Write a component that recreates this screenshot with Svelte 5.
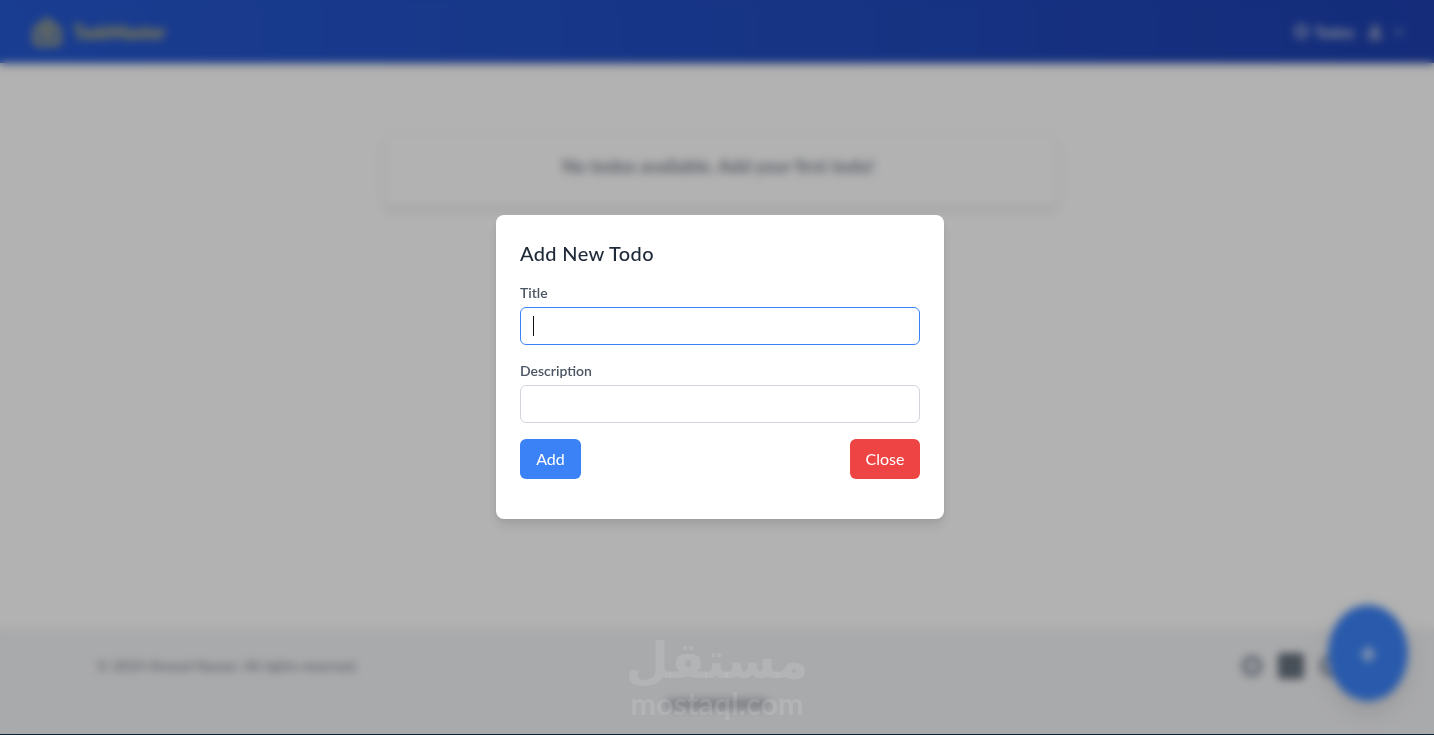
<script>
  let title = $state('');
  let description = $state('');
</script>

<div class="page">
  <header class="topbar">
    <div class="brand">
      <svg class="logo" viewBox="0 0 24 24" fill="none" stroke="#d8c55e" stroke-width="3" stroke-linejoin="round"><path d="M12 2 L22 10 V20 a2 2 0 0 1-2 2 H4 a2 2 0 0 1-2-2 V10 Z"/><circle cx="12" cy="13" r="3"/></svg>
      <span class="brand-name">TaskMaster</span>
    </div>
    <nav class="nav">
      <a class="nav-link" href="#todos">
        <svg class="nav-icon" viewBox="0 0 24 24" fill="none" stroke="#c5cbd8" stroke-width="4"><circle cx="12" cy="12" r="9"/></svg>
        <span>Todos</span>
      </a>
      <svg class="user-icon" viewBox="0 0 24 24" fill="none" stroke="#aab3c8" stroke-width="4"><circle cx="12" cy="7" r="5"/><path d="M3 23c0-6 4-8 9-8s9 2 9 8z"/></svg>
      <svg class="chev" viewBox="0 0 12 12" fill="none" stroke="#c5cbd8" stroke-width="2"><path d="M2 4l4 4 4-4"/></svg>
    </nav>
  </header>

  <main class="content">
    <div class="empty-card">No todos available. Add your first todo!</div>
  </main>

  <footer class="footer">
    <div class="footer-row">
      <span class="copy">© 2024 Ahmed Nasser. All rights reserved.</span>
      <div class="socials">
        <svg class="soc round" viewBox="0 0 24 24" fill="none" stroke="#858e9e" stroke-width="5"><circle cx="12" cy="12" r="8"/></svg>
        <svg class="soc square" viewBox="0 0 24 24" fill="#66717e"><rect width="24" height="24" rx="3"/></svg>
        <svg class="soc round" viewBox="0 0 24 24" fill="none" stroke="#858e9e" stroke-width="5"><circle cx="12" cy="12" r="8"/></svg>
      </div>
    </div>
    <div class="credit"></div>
  </footer>

  <button class="fab" aria-label="Add todo">+</button>
</div>

<div class="overlay">
  <form class="modal" onsubmit={(e) => e.preventDefault()}>
    <h2>Add New Todo</h2>
    <label class="field">
      <span>Title</span>
      <div class="input-wrap">
        <input class="focused" type="text" bind:value={title} />
        <i class="caret"></i>
      </div>
    </label>
    <label class="field">
      <span>Description</span>
      <input type="text" bind:value={description} />
    </label>
    <div class="actions">
      <button class="btn add" type="submit">Add</button>
      <button class="btn close" type="button">Close</button>
    </div>
  </form>
</div>

<div class="watermark">
  <div class="wm-ar" dir="rtl" lang="ar">مستقل</div>
  <div class="wm-en">mostaql.com</div>
</div>

<style>
  :global(body) {
    margin: 0;
    background: #0c2233;
    font-family: "Lato", "Liberation Sans", sans-serif;
    overflow: hidden;
  }
  .page {
    height: 734px;
    display: flex;
    flex-direction: column;
    background: #fff;
    position: relative;
    overflow: hidden;
  }
  .topbar {
    height: 63px;
    flex: none;
    display: flex;
    align-items: center;
    justify-content: space-between;
    padding: 0 30px 0 33px;
    background: linear-gradient(90deg, #2558d0, #1e40af);
    box-shadow: 0 4px 6px rgba(0, 0, 0, 0.12);
    position: relative;
  }
  .brand { display: flex; align-items: center; gap: 12px; }
  .logo { width: 28px; height: 30px; }
  .brand-name { color: #d8c55e; font-size: 18px; font-weight: 700; white-space: nowrap; }
  .nav { display: flex; align-items: center; }
  .nav-link { display: flex; align-items: center; gap: 5px; color: #c5cbd8; text-decoration: none; font-size: 15px; font-weight: 700; }
  .nav-icon { width: 15px; height: 15px; }
  .user-icon { width: 14px; height: 18px; margin-left: 14px; }
  .chev { width: 10px; height: 10px; margin-left: 12px; }
  .content {
    flex: 1;
    padding: 72px 0 0 8px;
    display: flex;
    justify-content: center;
    align-items: flex-start;
  }
  .empty-card {
    width: 672px;
    height: 72px;
    box-sizing: border-box;
    padding: 0 6px 10px 0;
    display: flex;
    align-items: center;
    justify-content: center;
    background: #fff;
    border-radius: 8px;
    box-shadow: 0 4px 6px rgba(0, 0, 0, 0.1), 0 0 4px rgba(0, 0, 0, 0.05);
    color: #868c98;
    font-size: 18px;
    font-weight: 700;
  }
  .footer {
    height: 106px;
    flex: none;
    background: #f3f4f6;
    padding: 27px 92px 0 97px;
    box-sizing: border-box;
    display: flex;
    flex-direction: column;
    gap: 22px;
  }
  .footer-row { display: flex; align-items: flex-start; justify-content: space-between; height: 22px; }
  .copy { color: #808692; font-size: 14px; font-weight: 500; line-height: 22px; }
  .socials { display: flex; align-items: center; gap: 14px; margin-top: -2px; }
  .soc.round { width: 24px; height: 24px; }
  .soc.square { width: 26px; height: 26px; }
  .credit {
    width: 104px;
    height: 10px;
    margin-left: 568px;
    border-radius: 5px;
    background: #b4b8c2;
  }
  .fab {
    position: absolute;
    left: 1328px;
    top: 605px;
    width: 80px;
    height: 96px;
    border: 0;
    border-radius: 50%;
    background: #3b82f6;
    color: #fff;
    font-size: 30px;
    font-weight: 700;
    font-family: inherit;
    padding: 0;
    box-shadow: 0 10px 25px rgba(0, 0, 0, 0.12);
  }
  .overlay {
    position: fixed;
    left: 0;
    right: 0;
    top: 0;
    height: 734px;
    background: rgba(0, 0, 0, 0.3);
    backdrop-filter: blur(4px);
    display: flex;
    justify-content: center;
    align-items: flex-start;
    padding: 215px 0 0 6px;
    box-sizing: border-box;
  }
  .modal {
    width: 448px;
    height: 304px;
    box-sizing: border-box;
    padding: 24px;
    background: #fff;
    border-radius: 8px;
    box-shadow: 0 8px 12px rgba(0, 0, 0, 0.08), 0 3px 5px rgba(0, 0, 0, 0.06);
  }
  h2 {
    margin: 0 0 16px;
    font-size: 20px;
    font-weight: 500;
    line-height: 28px;
    letter-spacing: 0.35px;
    color: #1f2937;
  }
  .field { display: block; margin-bottom: 16px; }
  .field span {
    display: block;
    font-size: 14px;
    font-weight: 600;
    line-height: 20px;
    margin-bottom: 4px;
    color: #4b5563;
  }
  .input-wrap { position: relative; }
  input {
    display: block;
    width: 100%;
    height: 38px;
    box-sizing: border-box;
    border: 1px solid #d1d5db;
    border-radius: 6px;
    background: #fff;
    padding: 0 12px;
    outline: 0;
    font: inherit;
  }
  input.focused { border-color: #3b82f6; }
  .caret {
    position: absolute;
    left: 13px;
    top: 9px;
    width: 1px;
    height: 20px;
    background: #111;
  }
  .actions { display: flex; justify-content: space-between; }
  .btn {
    height: 40px;
    border: 0;
    border-radius: 6px;
    color: #fff;
    font: inherit;
    font-size: 16px;
    font-weight: 400;
    padding: 0 0 2px;
  }
  .add { width: 61px; background: #3b82f6; }
  .close { width: 70px; background: #ef4444; }
  .watermark {
    position: fixed;
    left: 620px;
    top: 628px;
    width: 194px;
    text-align: center;
    color: rgba(255, 255, 255, 0.12);
    pointer-events: none;
  }
  .wm-ar { font-family: "DejaVu Sans", sans-serif; font-weight: 700; font-size: 50px; line-height: 54px; padding-top: 6px; }
  .wm-en { font-family: "Lato", sans-serif; font-weight: 700; font-size: 30.5px; line-height: 30px; }
</style>
